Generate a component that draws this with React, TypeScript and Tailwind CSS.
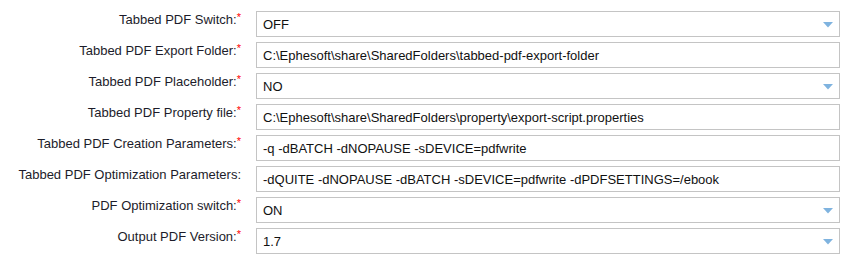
import React from "react";

type Row = { label: string; required: boolean; value: string; select: boolean };

const rows: Row[] = [
  { label: "Tabbed PDF Switch:", required: true, value: "OFF", select: true },
  { label: "Tabbed PDF Export Folder:", required: true, value: "C:\\Ephesoft\\share\\SharedFolders\\tabbed-pdf-export-folder", select: false },
  { label: "Tabbed PDF Placeholder:", required: true, value: "NO", select: true },
  { label: "Tabbed PDF Property file:", required: true, value: "C:\\Ephesoft\\share\\SharedFolders\\property\\export-script.properties", select: false },
  { label: "Tabbed PDF Creation Parameters:", required: true, value: "-q -dBATCH -dNOPAUSE -sDEVICE=pdfwrite", select: false },
  { label: "Tabbed PDF Optimization Parameters:", required: false, value: "-dQUITE -dNOPAUSE -dBATCH -sDEVICE=pdfwrite -dPDFSETTINGS=/ebook", select: false },
  { label: "PDF Optimization switch:", required: true, value: "ON", select: true },
  { label: "Output PDF Version:", required: true, value: "1.7", select: true },
];

export default function App() {
  return (
    <div
      className="w-[851px] h-[264px] bg-white pt-[11px] flex flex-col gap-[5px]"
      style={{ fontFamily: '"Liberation Sans", Arial, sans-serif' }}
    >
      {rows.map((r) => (
        <div key={r.label} className="flex items-start">
          <div className="w-[241px] text-right text-[13px] leading-[15px] text-[#1c1c2a] pt-[1px]">
            {r.label}
            {r.required && <span className="text-[#f00] text-[11px] relative top-[-3px]">*</span>}
          </div>
          <div className="ml-[15px] w-[584px] h-[26px] border border-[#c4c4c4] flex items-center justify-between pl-[6px] pr-[6px] text-[13px] text-[#111]">
            <span className="pt-[1px]">{r.value}</span>
            {r.select && (
              <svg width="10" height="6" viewBox="0 0 10 6" className="mt-[1px]">
                <polygon points="0,0 10,0 5,5.5" fill="#7fb3df" />
              </svg>
            )}
          </div>
        </div>
      ))}
    </div>
  );
}
